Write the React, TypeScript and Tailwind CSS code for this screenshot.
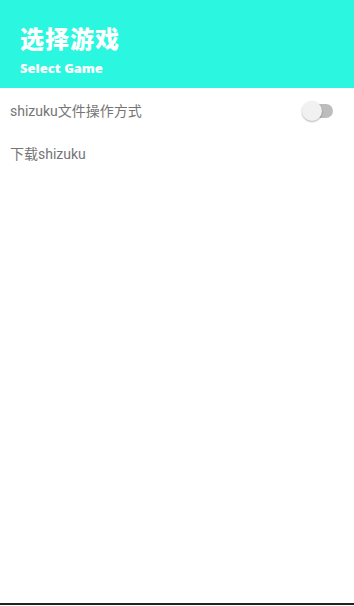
export default function App() {
  return (
    <div
      className="flex h-[606px] w-[354px] flex-col bg-white"
      style={{ fontFamily: "Roboto, 'Noto Sans CJK SC', sans-serif" }}
    >
      <header className="flex h-[88px] flex-col justify-end bg-[#2bf6df] px-5 pb-[13px]">
        <h1 className="text-[24px] font-black leading-[28px] tracking-[1px] text-white">选择游戏</h1>
        <p
          className="mt-[7px] text-[13px] font-extrabold leading-[14px] text-white"
          style={{ fontFamily: "'Open Sans', sans-serif" }}
        >
          Select Game
        </p>
      </header>
      <main className="flex-1">
        <div className="flex h-[46px] items-center justify-between pl-[10px] pr-[21px]">
          <span className="text-[14px] text-[#757575]">shizuku文件操作方式</span>
          <div className="relative h-[20px] w-[31px]">
            <div className="absolute left-[10px] right-0 top-[3px] h-[14px] rounded-full bg-[#bdbdbd]" />
            <div className="absolute left-0 top-0 h-[20px] w-[20px] rounded-full bg-[#f1f1f1] shadow-[0_1px_2px_rgba(0,0,0,0.3)]" />
          </div>
        </div>
        <div className="flex h-[40px] items-center pl-[10px]">
          <span className="text-[14px] text-[#757575]">下载shizuku</span>
        </div>
      </main>
      <div className="h-[2px] bg-[#222]" />
      <div className="h-[1px]" />
    </div>
  );
}
